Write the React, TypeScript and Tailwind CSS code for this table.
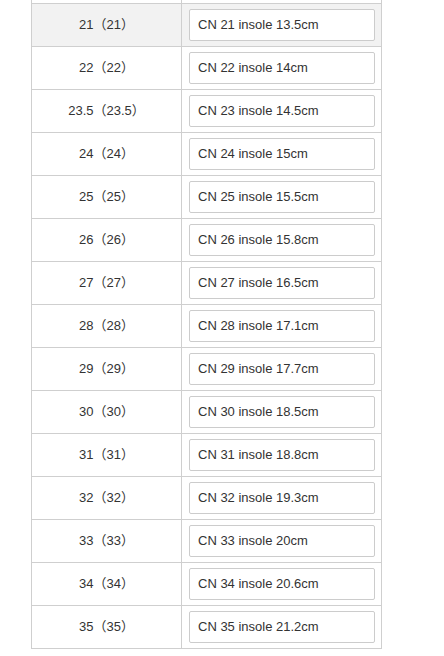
import React from 'react';

interface ISizeRow {
  size: string;
  label: string;
}

const rows: ISizeRow[] = [
  { size: '21', label: 'CN 21 insole 13.5cm' },
  { size: '22', label: 'CN 22 insole 14cm' },
  { size: '23.5', label: 'CN 23 insole 14.5cm' },
  { size: '24', label: 'CN 24 insole 15cm' },
  { size: '25', label: 'CN 25 insole 15.5cm' },
  { size: '26', label: 'CN 26 insole 15.8cm' },
  { size: '27', label: 'CN 27 insole 16.5cm' },
  { size: '28', label: 'CN 28 insole 17.1cm' },
  { size: '29', label: 'CN 29 insole 17.7cm' },
  { size: '30', label: 'CN 30 insole 18.5cm' },
  { size: '31', label: 'CN 31 insole 18.8cm' },
  { size: '32', label: 'CN 32 insole 19.3cm' },
  { size: '33', label: 'CN 33 insole 20cm' },
  { size: '34', label: 'CN 34 insole 20.6cm' },
  { size: '35', label: 'CN 35 insole 21.2cm' },
];

const App: React.FC = () => {
  return (
    <main className="min-h-screen bg-white pl-[31px] font-['Liberation_Sans','Noto_Sans_CJK_SC',sans-serif] text-[13px] text-[#333]">
      <div className="w-[351px] border-x border-[#cfcfcf]">
        {/* sliver of the row above */}
        <div className="grid h-[3px] grid-cols-[150px_1fr]">
          <div className="border-r border-[#cfcfcf]" />
          <div />
        </div>

        {rows.map((r, i) => (
          <div
            key={r.size}
            className={`grid h-[43px] grid-cols-[150px_1fr] border-t border-[#cfcfcf] ${
              i === 0 ? 'bg-[#f2f2f2]' : 'bg-white'
            }`}
          >
            <div className="flex items-center justify-center border-r border-[#cfcfcf]">
              {r.size}（{r.size}）
            </div>
            <div className="flex items-center pl-[7px] pr-[6px]">
              <div className="flex h-[32px] w-full items-center rounded-[2px] border border-[#cccccc] bg-white px-[8px]">
                {r.label}
              </div>
            </div>
          </div>
        ))}
        <div className="border-t border-[#cfcfcf]" />
      </div>
    </main>
  );
};

export default App;
